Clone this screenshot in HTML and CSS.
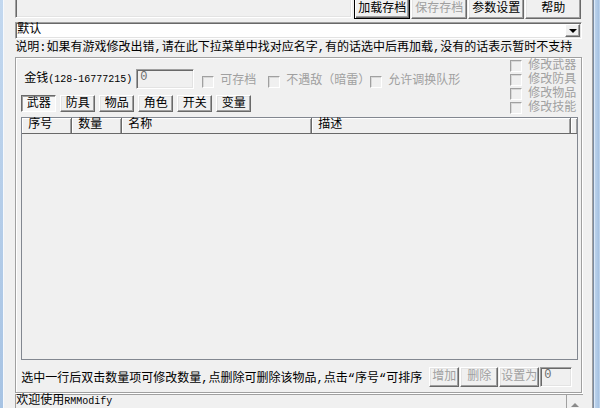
FILE: index.html
```html
<!DOCTYPE html>
<html>

	<head>
		<meta charset="UTF-8">
		<title>RMModify</title>
		<link rel="stylesheet" href="styles.css">
	</head>

	<body>
		<div class="win">
			<div class="frame-left"></div>
			<div class="client">
				<!--顶部工具栏-->
				<div class="toolbar">
					<div class="edit path"></div>
					<a class="btn btn-default">加载存档</a>
					<a class="btn disabled">保存存档</a>
					<a class="btn">参数设置</a>
					<a class="btn">帮助</a>
				</div>
				<!--游戏下拉框-->
				<div class="combo">
					<span class="combo-text">默认</span>
					<span class="combo-arrow"><i></i></span>
				</div>
				<p class="tip">说明:如果有游戏修改出错,请在此下拉菜单中找对应名字,有的话选中后再加载,没有的话表示暂时不支持</p>
				<div class="group">
					<div class="group-top">
						<div class="group-left">
							<div class="money">
								<span class="money-label">金钱<span class="en">(128-16777215)</span></span>
								<div class="edit num">0</div>
								<label class="chk chk-save"><i></i>可存档</label>
								<label class="chk chk-enemy"><i></i>不遇敌（暗雷）</label>
								<label class="chk"><i></i>允许调换队形</label>
							</div>
							<div class="tabs">
								<a class="btn tab current">武器</a>
								<a class="btn tab">防具</a>
								<a class="btn tab">物品</a>
								<a class="btn tab">角色</a>
								<a class="btn tab">开关</a>
								<a class="btn tab">变量</a>
							</div>
						</div>
						<ul class="mods">
							<li><i></i>修改武器</li>
							<li><i></i>修改防具</li>
							<li><i></i>修改物品</li>
							<li><i></i>修改技能</li>
						</ul>
					</div>
					<!--物品列表-->
					<div class="list">
						<div class="list-head">
							<span class="col c1">序号</span>
							<span class="col c2">数量</span>
							<span class="col c3">名称</span>
							<span class="col c4">描述</span>
							<span class="col c5"></span>
						</div>
						<div class="list-body"></div>
					</div>
					<div class="actions">
						<span class="hint">选中一行后双击数量项可修改数量,点删除可删除该物品,点击“序号“可排序</span>
						<a class="btn disabled b-add">增加</a>
						<a class="btn disabled b-del">删除</a>
						<a class="btn disabled b-set">设置为</a>
						<div class="edit num small">0</div>
					</div>
				</div>
				<!--状态栏-->
				<div class="status">
					<span class="panel">欢迎使用<span class="en">RMModify</span></span>
					<span class="grip"><i></i></span>
				</div>
			</div>
			<div class="frame-right"></div>
		</div>
	</body>

</html>
```

FILE: styles.css
```css
* {
	margin: 0;
	padding: 0;
	list-style: none;
	box-sizing: border-box;
}

body {
	width: 600px;
	height: 408px;
	overflow: hidden;
	background: #f0f0f0;
	font-family: "Liberation Mono", "Noto Sans CJK SC", monospace;
	font-size: 12px;
	color: #000;
}

.en {
	font-family: "Liberation Mono", monospace;
	font-size: 10px;
}

.win {
	display: flex;
	height: 408px;
}

.frame-left {
	width: 4px;
	background: linear-gradient(#c3d8ef, #a7c3e3);
}

.frame-right {
	width: 8px;
	background: linear-gradient(to right, #7b8ba1 0, #7b8ba1 1px, #dce9f7 1px, #dce9f7 2px, #bcd3ec 2px, #a5c1e1 6px, #d2e2f4 7px);
}

.client {
	flex: 1;
	display: flex;
	flex-direction: column;
	padding: 0 9px 0 11px;
	border-left: 1px solid #f6f9fd;
	border-right: 1px solid #a0a0a0;
	background: #f0f0f0;
}

/*按钮*/
.btn {
	display: flex;
	align-items: center;
	justify-content: center;
	height: 21px;
	background: #f0f0f0;
	border: 1px solid;
	border-color: #fff #696969 #696969 #fff;
	box-shadow: inset -1px -1px #a0a0a0, inset 1px 1px #e3e3e3;
	color: #000;
	line-height: 14px;
	cursor: default;
}

.btn-default {
	border-color: #000;
	box-shadow: inset 1px 1px #fff, inset -1px -1px #696969, inset -2px -2px #a0a0a0;
}

.btn.disabled {
	color: #a0a0a0;
}

/*文本框*/
.edit {
	border: 1px solid;
	border-color: #a0a0a0 #fff #fff #a0a0a0;
	box-shadow: inset 1px 1px #696969, inset -1px -1px #e3e3e3;
	background: #f0f0f0;
}

.edit.num {
	padding: 1px 0 0 3px;
	color: #6d6d6d;
	line-height: 13px;
}

.toolbar {
	display: flex;
	gap: 1px;
	margin-top: -2px;
	height: 21px;
}

.toolbar .path {
	width: 337px;
	height: 20px;
	margin-right: 1px;
}

.toolbar .btn {
	width: 56px;
}

.combo {
	display: flex;
	align-items: center;
	justify-content: space-between;
	height: 17px;
	margin: 3px 1px 0 0;
	padding: 0 1px 0 1px;
	border: 1px solid;
	border-color: #a0a0a0 #fff #fff #a0a0a0;
	box-shadow: inset 1px 1px #696969, inset -1px -1px #e3e3e3;
	background: #fff;
	line-height: 13px;
}

.combo-arrow {
	display: flex;
	align-items: center;
	justify-content: center;
	width: 15px;
	height: 13px;
	background: #f0f0f0;
	border: 1px solid;
	border-color: #fff #696969 #696969 #fff;
	box-shadow: inset -1px -1px #a0a0a0;
}

.combo-arrow i {
	width: 0;
	height: 0;
	border-left: 4px solid transparent;
	border-right: 4px solid transparent;
	border-top: 4px solid #000;
}

.tip {
	margin-top: 1px;
	line-height: 16px;
	height: 16px;
	white-space: nowrap;
}

/*分组框*/
.group {
	margin: 1px 1px 0 0;
	padding: 1px 3px 5px 5px;
	border: 1px solid #a0a0a0;
	box-shadow: inset 1px 1px #fff, 1px 1px #fff;
	display: flex;
	flex-direction: column;
}

.group-top {
	display: flex;
	height: 56px;
}

.group-left {
	flex: 1;
	padding-top: 10px;
}

.money {
	display: flex;
	align-items: flex-start;
	height: 20px;
	padding-left: 3px;
}

.money-label {
	margin-top: 3px;
	line-height: 14px;
	white-space: nowrap;
}

.money .num {
	width: 58px;
	height: 20px;
	margin-left: 4px;
}

.chk {
	display: flex;
	align-items: center;
	margin-top: 6px;
	height: 13px;
	line-height: 13px;
	color: #a0a0a0;
	white-space: nowrap;
}

.chk i,
.mods li i {
	width: 12px;
	height: 12px;
	margin-right: 6px;
	border: 1px solid;
	border-color: #a0a0a0 #fff #fff #a0a0a0;
	box-shadow: inset 1px 1px #d8d8d8;
	background: #f0f0f0;
}

.chk-save {
	width: 66px;
	margin-left: 8px;
}

.chk-enemy {
	width: 102px;
}

.tabs {
	display: flex;
	gap: 4px;
	margin-top: 6px;
}

.tab {
	width: 35px;
	height: 17px;
}

.tab.current {
	border-color: #696969 #fff #fff #696969;
	box-shadow: inset 1px 1px #a0a0a0;
	background: #f7f7f7;
	padding-top: 1px;
}

.mods {
	width: 68px;
}

.mods li {
	display: flex;
	align-items: center;
	height: 14px;
	line-height: 13px;
	color: #a0a0a0;
	white-space: nowrap;
}

/*列表*/
.list {
	margin-top: 2px;
	height: 243px;
	border: 1px solid #828790;
	display: flex;
	flex-direction: column;
}

.list-head {
	display: flex;
	height: 16px;
	border-bottom: 1px solid #696969;
}

.list-head .col {
	height: 15px;
	padding-left: 6px;
	line-height: 14px;
	border-right: 1px solid #696969;
	box-shadow: inset 1px 1px #fff, inset -1px 0 #a0a0a0;
	white-space: nowrap;
}

.c1 {
	width: 50px;
}

.c2 {
	width: 50px;
}

.c3 {
	width: 190px;
}

.c4 {
	width: 259px;
}

.list-head .c5 {
	flex: 1;
	border-right: 0;
}

.list-body {
	flex: 1;
	background: #f0f0f0;
}

.actions {
	display: flex;
	align-items: center;
	gap: 1px;
	height: 20px;
	margin-top: 7px;
	padding-right: 6px;
}

.hint {
	margin-right: auto;
	white-space: nowrap;
}

.actions .btn {
	height: 20px;
}

.b-add {
	width: 30px;
}

.b-del {
	width: 38px;
}

.b-set {
	width: 40px;
}

.actions .small {
	width: 32px;
	height: 20px;
}

/*状态栏*/
.status {
	display: flex;
	margin-top: 1px;
	height: 14px;
}

.status .panel {
	flex: 1;
	border-top: 1px solid #a0a0a0;
	border-left: 1px solid #a0a0a0;
	line-height: 13px;
	white-space: nowrap;
}

.status .grip {
	width: 17px;
	border-top: 1px solid #a0a0a0;
	border-left: 1px solid #a0a0a0;
	display: flex;
	justify-content: center;
	padding-top: 8px;
}

.status .grip i {
	width: 0;
	height: 0;
	border-left: 4px solid transparent;
	border-right: 4px solid transparent;
	border-bottom: 4px solid #8a8a8a;
}
```
